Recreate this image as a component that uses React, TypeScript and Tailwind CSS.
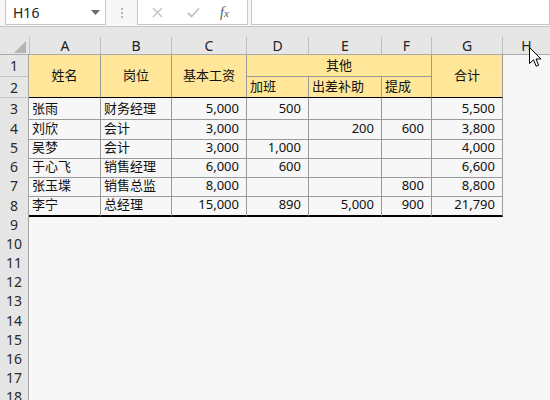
import React from "react";

const font = { fontFamily: '"Noto Sans", "Noto Sans CJK SC", sans-serif' };

type Row = { n: number; name: string; pos: string; base: string; ot: string; trip: string; comm: string; total: string; h: string };

const data: Row[] = [
  { n: 3, name: "张雨", pos: "财务经理", base: "5,000", ot: "500", trip: "", comm: "", total: "5,500", h: "h-[20px]" },
  { n: 4, name: "刘欣", pos: "会计", base: "3,000", ot: "", trip: "200", comm: "600", total: "3,800", h: "h-[19px]" },
  { n: 5, name: "吴梦", pos: "会计", base: "3,000", ot: "1,000", trip: "", comm: "", total: "4,000", h: "h-[19px]" },
  { n: 6, name: "于心飞", pos: "销售经理", base: "6,000", ot: "600", trip: "", comm: "", total: "6,600", h: "h-[19px]" },
  { n: 7, name: "张玉堞", pos: "销售总监", base: "8,000", ot: "", trip: "", comm: "800", total: "8,800", h: "h-[20px]" },
  { n: 8, name: "李宁", pos: "总经理", base: "15,000", ot: "890", trip: "5,000", comm: "900", total: "21,790", h: "h-[19px]" },
];

const emptyRows: { n: number; h: string }[] = [
  { n: 9, h: "h-[19px]" },
  { n: 10, h: "h-[19px]" },
  { n: 11, h: "h-[19px]" },
  { n: 12, h: "h-[19px]" },
  { n: 13, h: "h-[20px]" },
  { n: 14, h: "h-[19px]" },
  { n: 15, h: "h-[19px]" },
  { n: 16, h: "h-[19px]" },
  { n: 17, h: "h-[19px]" },
  { n: 18, h: "h-[19px]" },
];

const cols = "grid grid-cols-[29px_72px_71px_75px_62px_73px_50px_71px_1fr]";

function RowHead({ n, extra = "" }: { n: number; extra?: string }) {
  return (
    <div className={`flex items-center justify-center bg-[#e6e6e6] border-r border-b border-r-[#a6a6a6] border-b-[#c4c4c4] text-[14px] text-[#2a2a2a] ${extra}`}>
      {n}
    </div>
  );
}

export default function App() {
  const colHeads = ["A", "B", "C", "D", "E", "F", "G", "H"];
  return (
    <div className="relative w-[550px] h-[400px] overflow-hidden bg-[#f7f7f7] text-[13px] text-[#111]" style={font}>
      {/* Toolbar */}
      <div className="h-[27px] flex items-start bg-[#f7f7f7] border-b border-[#c6c6c6]">
        <div className="ml-[5px] w-[101px] h-[26px] -mt-px bg-white border border-[#c6c6c6] flex items-center justify-between pl-[7px] pr-[5px]">
          <span className="text-[14px] text-[#222]">H16</span>
          <svg width="9" height="5" viewBox="0 0 9 5"><polygon points="0,0 9,0 4.5,5" fill="#6b6b6b" /></svg>
        </div>
        <div className="w-[31px] h-[26px] flex flex-col items-center justify-center gap-[2px]">
          <div className="w-[2px] h-[2px] bg-[#b5b5b5]" />
          <div className="w-[2px] h-[2px] bg-[#b5b5b5]" />
          <div className="w-[2px] h-[2px] bg-[#b5b5b5]" />
        </div>
        <div className="w-[111px] h-[26px] -mt-px bg-white border border-[#c6c6c6] flex items-center">
          <svg className="ml-[14px]" width="11" height="11" viewBox="0 0 11 11">
            <path d="M1 1 L10 10 M10 1 L1 10" stroke="#c2c2c2" strokeWidth="1.4" />
          </svg>
          <svg className="ml-[24px]" width="13" height="11" viewBox="0 0 13 11">
            <path d="M1 6 L4.5 9.5 L12 1.5" stroke="#c2c2c2" strokeWidth="1.8" fill="none" />
          </svg>
          <span className="ml-[20px] text-[14px] italic text-[#555]" style={{ fontFamily: '"Liberation Serif", serif' }}>
            f<span className="text-[11px]">x</span>
          </span>
        </div>
        <div className="ml-[3px] flex-1 h-[26px] -mt-px bg-white border border-[#c6c6c6]" />
      </div>

      {/* Column header row */}
      <div className={`${cols} h-[28px] bg-[#e6e6e6] border-b border-[#ababab]`}>
        <div className="relative">
          <svg className="absolute left-[14px] top-[14px]" width="12" height="12" viewBox="0 0 12 12">
            <polygon points="12,0 12,12 0,12" fill="#b4b4b4" />
          </svg>
        </div>
        {colHeads.map((c, i) => (
          <div key={c} className="flex flex-col justify-end">
            <div className={`h-[17px] flex items-center justify-center text-[14px] text-[#222] ${i < 7 ? "border-r border-[#c0c0c0]" : ""} ${i === 0 ? "border-l border-[#c0c0c0]" : ""}`}>
              {c}
            </div>
          </div>
        ))}
      </div>

      {/* Header rows 1-2 */}
      <div className={`${cols} grid-rows-[22px_21px]`}>
        <RowHead n={1} extra="col-start-1 row-start-1" />
        <RowHead n={2} extra="col-start-1 row-start-2" />
        <div className="col-start-2 row-start-1 row-span-2 bg-[#ffe699] border-r border-b border-r-[#9a9a9a] border-b-black flex items-center justify-center">姓名</div>
        <div className="col-start-3 row-start-1 row-span-2 bg-[#ffe699] border-r border-b border-r-[#9a9a9a] border-b-black flex items-center justify-center">岗位</div>
        <div className="col-start-4 row-start-1 row-span-2 bg-[#ffe699] border-r border-b border-r-[#9a9a9a] border-b-black flex items-center justify-center">基本工资</div>
        <div className="col-start-5 col-span-3 row-start-1 bg-[#ffe699] border-r border-b border-[#9a9a9a] flex items-center justify-center">其他</div>
        <div className="col-start-5 row-start-2 bg-[#ffe699] border-r border-b border-r-[#9a9a9a] border-b-black flex items-center pl-[3px]">加班</div>
        <div className="col-start-6 row-start-2 bg-[#ffe699] border-r border-b border-r-[#9a9a9a] border-b-black flex items-center pl-[3px]">出差补助</div>
        <div className="col-start-7 row-start-2 bg-[#ffe699] border-r border-b border-r-[#9a9a9a] border-b-black flex items-center pl-[3px]">提成</div>
        <div className="col-start-8 row-start-1 row-span-2 bg-[#ffe699] border-r border-b border-r-[#9a9a9a] border-b-black flex items-center justify-center">合计</div>
        <div className="col-start-9 row-start-1 row-span-2" />
      </div>

      {/* Data rows */}
      {data.map((r, idx) => {
        const last = idx === data.length - 1;
        const b = `border-r border-r-[#9a9a9a] ${last ? "border-b-2 border-b-black" : "border-b border-b-[#9a9a9a]"}`;
        const L = `flex items-center pl-[3px] ${b}`;
        const R = `flex items-center justify-end pr-[7px] ${b}`;
        return (
          <div key={r.n} className={`${cols} ${r.h}`}>
            <RowHead n={r.n} />
            <div className={L}>{r.name}</div>
            <div className={L}>{r.pos}</div>
            <div className={R}>{r.base}</div>
            <div className={R}>{r.ot}</div>
            <div className={R}>{r.trip}</div>
            <div className={R}>{r.comm}</div>
            <div className={R}>{r.total}</div>
            <div />
          </div>
        );
      })}

      {emptyRows.map((r) => (
        <div key={r.n} className={`${cols} ${r.h}`}>
          <RowHead n={r.n} />
        </div>
      ))}

      {/* Mouse cursor */}
      <svg className="absolute left-[529px] top-[47px]" width="13" height="21" viewBox="0 0 13 21">
        <path d="M0.5 0.5 L0.5 16.5 L4.5 12.8 L7.2 19.2 L9.6 18.2 L7 12 L12 12 Z" fill="white" stroke="black" strokeWidth="1" strokeLinejoin="miter" />
      </svg>
    </div>
  );
}
